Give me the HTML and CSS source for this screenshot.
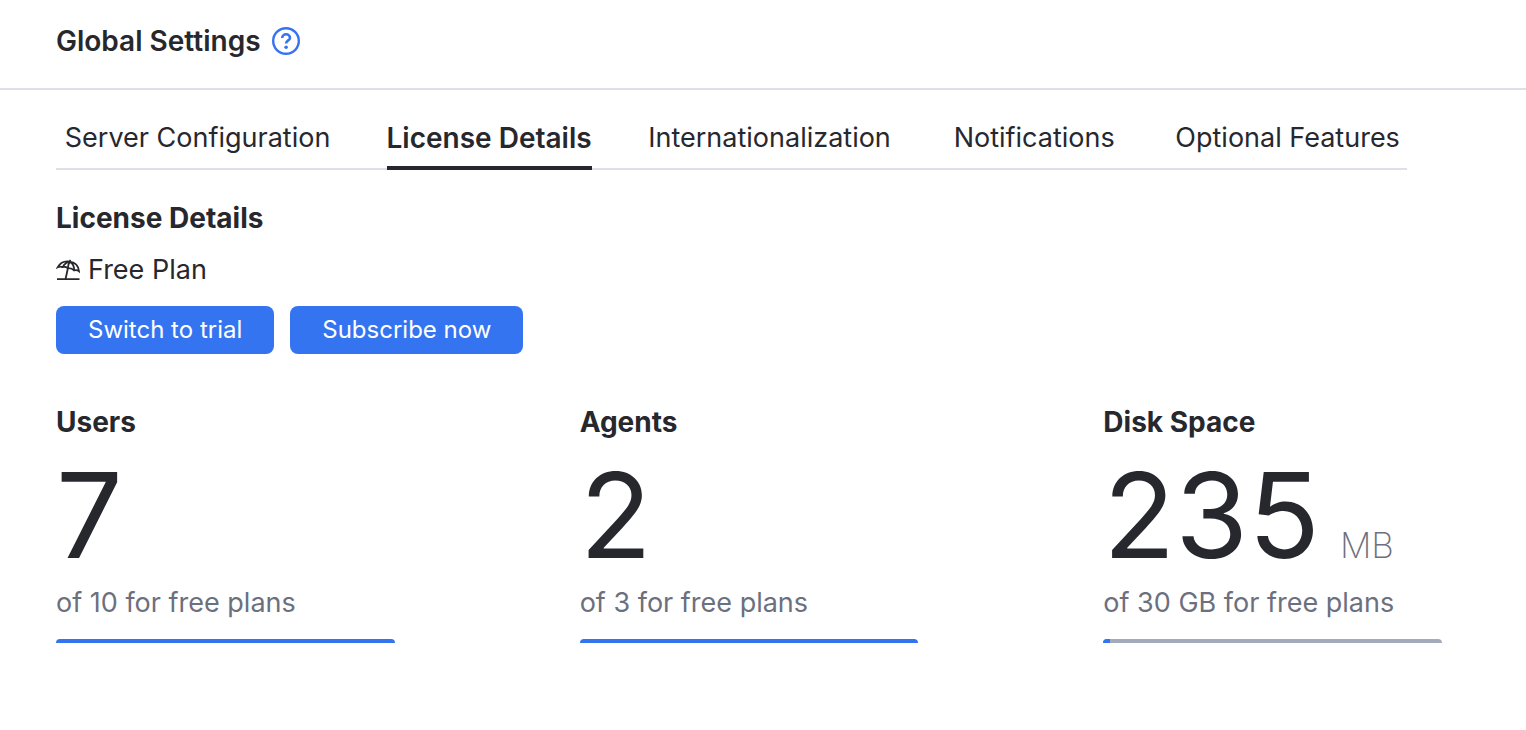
FILE: index.html
```html
<!DOCTYPE html>
<html lang="en">
<head>
<meta charset="utf-8">
<title>Global Settings</title>
<link rel="stylesheet" href="styles.css">
</head>
<body>
<header class="header">
  <h1 class="title">Global Settings</h1>
  <a class="help" href="#help" aria-label="Help">
    <svg viewBox="0 0 28 28" width="28" height="28" fill="none" stroke="currentColor" stroke-width="2.400"><circle cx="14" cy="14" r="12.800"/><path stroke-width="2.600" d="M10.200 10.900a3.900 3.600 0 0 1 7.800 0c0 2.500-3.900 2.600-3.900 5.600"/><circle cx="14.100" cy="20.200" r="1.800" fill="currentColor" stroke="none"/></svg>
  </a>
</header>
<main class="main">
  <nav class="tabs">
    <a class="tab" href="#server" data-label="Server Configuration">Server Configuration</a>
    <a class="tab active" href="#license" aria-current="page" data-label="License Details">License Details</a>
    <a class="tab" href="#i18n" data-label="Internationalization">Internationalization</a>
    <a class="tab" href="#notifications" data-label="Notifications">Notifications</a>
    <a class="tab" href="#features" data-label="Optional Features">Optional Features</a>
  </nav>
  <h2 class="heading">License Details</h2>
  <p class="plan">
    <svg viewBox="0 0 24 24" width="24" height="24" fill="none" stroke="currentColor" stroke-width="1.800"><path d="M1 21.200h22.500M11.900 10.200L9.500 21.200M14.200 1.800l-.3 1.900M1.800 9.200C4 5.200 8.500 2.700 13.900 3.600c5.200.9 8.700 4.700 9.100 9.600-1.300-1.100-3.200-1.400-4.900-.8-1.300-1.400-3.800-2.400-6.200-2.200-1.700-1.300-3.700-1.800-5.500-1.100-1.500-.7-3.200-.5-4.600.1zM6.600 9.100c1.700-3 4.300-5.200 7.300-5.500 2.700 1.500 4.300 5 4.200 8.800M11.900 10.200c.1-2.600.7-4.900 2-6.600"/></svg>
    Free Plan
  </p>
  <div class="actions">
    <button class="button" type="button">Switch to trial</button>
    <button class="button" type="button">Subscribe now</button>
  </div>
  <div class="stats">
    <section class="stat">
      <h3 class="heading stat-heading">Users</h3>
      <div class="value">7</div>
      <p class="limit">of 10 for free plans</p>
      <div class="meter"><div class="fill" style="width:100%"></div></div>
    </section>
    <section class="stat">
      <h3 class="heading stat-heading">Agents</h3>
      <div class="value">2</div>
      <p class="limit">of 3 for free plans</p>
      <div class="meter"><div class="fill" style="width:100%"></div></div>
    </section>
    <section class="stat">
      <h3 class="heading stat-heading">Disk Space</h3>
      <div class="value">235<span class="unit">MB</span></div>
      <p class="limit">of 30 GB for free plans</p>
      <div class="meter"><div class="fill" style="width:2%"></div></div>
    </section>
  </div>
</main>
</body>
</html>
```
FILE: styles.css
```css
* { box-sizing: border-box; }
body { margin: 0; background: #fff; color: #27282e; font-family: Inter, "Liberation Sans", sans-serif; font-size: 27px; line-height: 40px; }
h1, h2, h3, p { margin: 0; }
.header { display: flex; align-items: center; gap: 11px; padding: 21px 56px 27px; border-bottom: 2px solid #dfe0e5; }
.title, .heading { font-size: 28px; line-height: 40px; font-weight: 600; }
.help { display: flex; color: #3574f0; }
.main { padding: 28px 56px; }
.tabs { display: flex; justify-content: space-between; margin-right: 63px; border-bottom: 2px solid #dfe0e5; }
.tab { display: flex; flex-direction: column; align-items: center; margin-bottom: -2px; padding-bottom: 12px; color: inherit; text-decoration: none; white-space: nowrap; }
/* Reserves the width of the selected state so tabs keep their place. */
.tab::after { content: attr(data-label); height: 0; overflow: hidden; visibility: hidden; font-size: 28px; font-weight: 600; }
.active { padding-bottom: 8px; border-bottom: 4px solid #27282e; font-size: 28px; font-weight: 600; }
.heading { margin-top: 28px; font-weight: 700; }
.plan { display: flex; align-items: center; gap: 8px; margin-top: 12px; }
.actions { display: flex; gap: 16px; margin-top: 16px; }
.button { height: 48px; padding: 0 32px; border: 0; border-radius: 8px; background: #3574f0; color: #fff; font: 24px/48px Inter, "Liberation Sans", sans-serif; }
.stats { display: grid; grid-template-columns: repeat(3, 1fr); column-gap: 185px; margin: 48px 28px 0 0; }
.stat-heading { margin: 0; }
.value { height: 141px; font-size: 118px; line-height: 146px; white-space: nowrap; }
.unit { margin-left: 20px; font-size: 35px; line-height: 40px; font-weight: 200; color: #6c707e; }
.limit { color: #6c707e; }
.meter { height: 4px; margin-top: 16px; overflow: hidden; border-radius: 6px 6px 0 0; background: #a3abba; }
.fill { height: 4px; background: #3574f0; }
```
